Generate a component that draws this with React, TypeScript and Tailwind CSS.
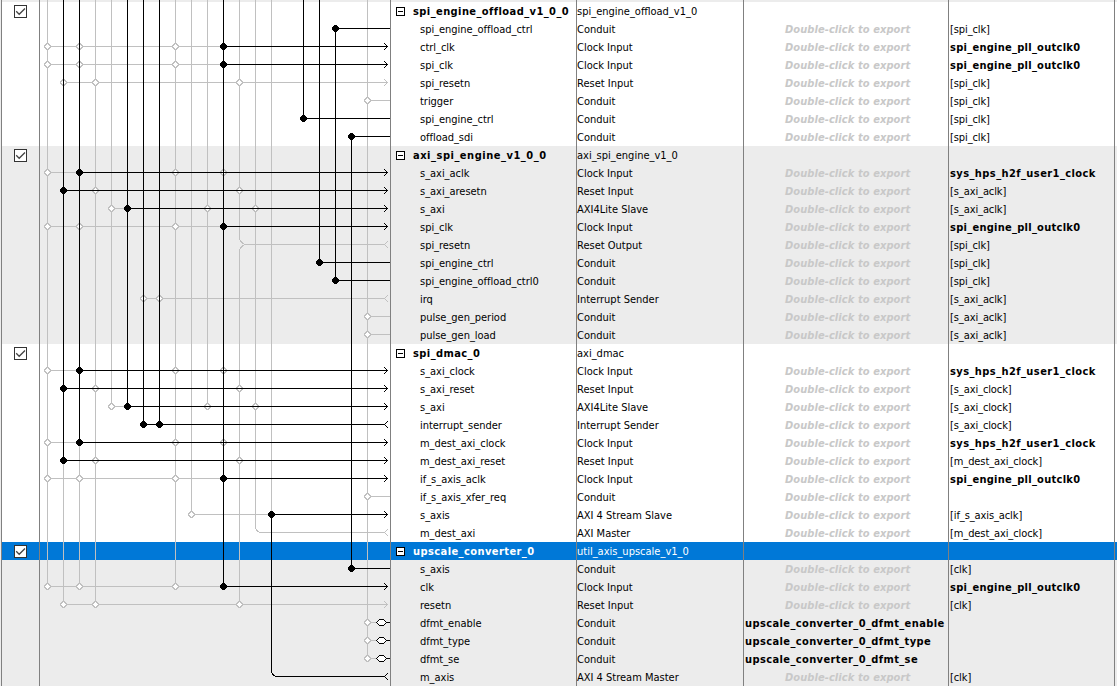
import React from "react";

type Row = {
  name: string;
  kind: string;
  clock?: string;
  export?: string;
  head?: boolean;
};

type Group = { shaded: boolean; selected?: boolean; rows: Row[] };

const g = (name: string, kind: string): Row => ({ name, kind, head: true });
const r = (name: string, kind: string, clock?: string, exp?: string): Row => ({
  name,
  kind,
  clock,
  export: exp,
});

const PLL = "spi_engine_pll_outclk0";
const HPS = "sys_hps_h2f_user1_clock";

const groups: Group[] = [
  {
    shaded: false,
    rows: [
      g("spi_engine_offload_v1_0_0", "spi_engine_offload_v1_0"),
      r("spi_engine_offload_ctrl", "Conduit", "[spi_clk]"),
      r("ctrl_clk", "Clock Input", PLL),
      r("spi_clk", "Clock Input", PLL),
      r("spi_resetn", "Reset Input", "[spi_clk]"),
      r("trigger", "Conduit", "[spi_clk]"),
      r("spi_engine_ctrl", "Conduit", "[spi_clk]"),
      r("offload_sdi", "Conduit", "[spi_clk]"),
    ],
  },
  {
    shaded: true,
    rows: [
      g("axi_spi_engine_v1_0_0", "axi_spi_engine_v1_0"),
      r("s_axi_aclk", "Clock Input", HPS),
      r("s_axi_aresetn", "Reset Input", "[s_axi_aclk]"),
      r("s_axi", "AXI4Lite Slave", "[s_axi_aclk]"),
      r("spi_clk", "Clock Input", PLL),
      r("spi_resetn", "Reset Output", "[spi_clk]"),
      r("spi_engine_ctrl", "Conduit", "[spi_clk]"),
      r("spi_engine_offload_ctrl0", "Conduit", "[spi_clk]"),
      r("irq", "Interrupt Sender", "[s_axi_aclk]"),
      r("pulse_gen_period", "Conduit", "[s_axi_aclk]"),
      r("pulse_gen_load", "Conduit", "[s_axi_aclk]"),
    ],
  },
  {
    shaded: false,
    rows: [
      g("spi_dmac_0", "axi_dmac"),
      r("s_axi_clock", "Clock Input", HPS),
      r("s_axi_reset", "Reset Input", "[s_axi_clock]"),
      r("s_axi", "AXI4Lite Slave", "[s_axi_clock]"),
      r("interrupt_sender", "Interrupt Sender", "[s_axi_clock]"),
      r("m_dest_axi_clock", "Clock Input", HPS),
      r("m_dest_axi_reset", "Reset Input", "[m_dest_axi_clock]"),
      r("if_s_axis_aclk", "Clock Input", PLL),
      r("if_s_axis_xfer_req", "Conduit"),
      r("s_axis", "AXI 4 Stream Slave", "[if_s_axis_aclk]"),
      r("m_dest_axi", "AXI Master", "[m_dest_axi_clock]"),
    ],
  },
  {
    shaded: true,
    selected: true,
    rows: [
      g("upscale_converter_0", "util_axis_upscale_v1_0"),
      r("s_axis", "Conduit", "[clk]"),
      r("clk", "Clock Input", PLL),
      r("resetn", "Reset Input", "[clk]"),
      r("dfmt_enable", "Conduit", undefined, "upscale_converter_0_dfmt_enable"),
      r("dfmt_type", "Conduit", undefined, "upscale_converter_0_dfmt_type"),
      r("dfmt_se", "Conduit", undefined, "upscale_converter_0_dfmt_se"),
      r("m_axis", "AXI 4 Stream Master", "[clk]"),
    ],
  },
];

/* ---- wiring ---- */

type End = "plain" | "in" | "out" | "export";
type Wire = {
  row: number;
  from: number;
  blackFrom?: number;
  end: End;
  open?: number[];
  dots?: number[];
};

const pll = (row: number): Wire => ({ row, from: 47, blackFrom: 223, end: "in", open: [47, 79, 175], dots: [223] });
const hps = (row: number): Wire => ({ row, from: 47, blackFrom: 79, end: "in", open: [47, 175, 223], dots: [79] });
const reset = (row: number): Wire => ({ row, from: 63, blackFrom: 63, end: "in", open: [95, 239], dots: [63] });
const freeReset = (row: number): Wire => ({ row, from: 63, end: "in", open: [63, 95, 239] });
const axi = (row: number): Wire => ({ row, from: 111, blackFrom: 127, end: "in", open: [111, 207, 255], dots: [127] });
const conduit = (row: number, x: number): Wire => ({ row, from: x, blackFrom: x, end: "plain", dots: [x] });
const spare = (row: number): Wire => ({ row, from: 367, end: "plain", open: [367] });
const exported = (row: number): Wire => ({ row, from: 367, end: "export", open: [367] });

const wires: Wire[] = [
  conduit(1, 335), pll(2), pll(3), freeReset(4), spare(5), conduit(6, 303), conduit(7, 351),
  hps(9), reset(10), axi(11), pll(12),
  { row: 13, from: 245, end: "out" },
  conduit(14, 319), conduit(15, 335),
  { row: 16, from: 143, end: "out", open: [143, 159] },
  spare(17), spare(18),
  hps(20), reset(21), axi(22),
  { row: 23, from: 143, blackFrom: 143, end: "out", dots: [143, 159] },
  hps(24), reset(25), pll(26), spare(27),
  { row: 28, from: 191, blackFrom: 271, end: "in", open: [191], dots: [271] },
  { row: 29, from: 262, end: "out" },
  conduit(31, 351), pll(32), freeReset(33), exported(34), exported(35), exported(36),
  { row: 37, from: 278, blackFrom: 278, end: "out" },
];

const grayBuses: [number, number, number][] = [
  [47, 0, 586], [63, 460, 604], [79, 442, 586], [95, 0, 604], [111, 0, 406],
  [175, 0, 586], [191, 0, 514], [207, 0, 406], [239, 0, 238], [239, 251, 604],
  [255, 0, 526], [271, 0, 514], [367, 0, 658],
];
const blackBuses: [number, number, number][] = [
  [63, 0, 460], [79, 0, 442], [127, 0, 406], [143, 0, 424], [159, 0, 424],
  [223, 0, 586], [271, 514, 670], [303, 0, 118], [319, 0, 262], [335, 28, 280], [351, 136, 568],
];

const wireY = (row: number) => 10 + 18 * row;
const endX: Record<End, number> = { plain: 390, in: 388, out: 385, export: 376 };

const hLine = (x1: number, x2: number, y: number) => `M${x1} ${y + 0.5}H${x2}`;
const vLine = ([x, y1, y2]: [number, number, number]) => `M${x + 0.5} ${y1}V${y2}`;

function tip(end: End, y: number) {
  if (end === "in") return `M384 ${y - 3}h1v1h1v1h1v1h1v1h-1v1h-1v1h-1v1h-1v-1h1v-1h1v-1h1v-1h-1v-1h-1v-1h-1z`;
  if (end === "out") return `M388 ${y - 3}h-1v1h-1v1h-1v1h-1v1h1v1h1v1h1v1h1v-1h-1v-1h-1v-1h-1v-1h1v-1h1v-1h1z`;
  return "";
}

function Wiring() {
  return (
    <svg
      className="pointer-events-none z-10 col-start-1 row-start-1 h-[687px] w-[390px]"
      viewBox="0 0 390 687"
      shapeRendering="crispEdges"
      fill="none"
    >
      <g stroke="#c0c0c0">
        <path d={grayBuses.map(vLine).join("")} />
        <path
          d={wires
            .filter((w) => w.from !== w.blackFrom)
            .map((w) => hLine(w.from, w.blackFrom ?? endX[w.end], wireY(w.row)))
            .join("")}
        />
        <path d="M239.5 237.5Q240 243 245.500 244.500M239.500 251.500Q240 246 245.500 244.500" />
        <path d="M255.500 525.500Q255.500 532.500 262.500 532.500" />
      </g>
      <path
        fill="#c0c0c0"
        d={wires.filter((w) => w.blackFrom === undefined).map((w) => tip(w.end, wireY(w.row))).join("")}
      />
      {wires.flatMap((w) =>
        (w.open ?? []).map((x) => (
          <g key={`${w.row}-${x}`} transform={`translate(${x - 3} ${wireY(w.row) - 3})`}>
            <path fill="#c0c0c0" d="M2 0h3v1h1v1h1v3h-1v1h-1v1h-3v-1h-1v-1h-1v-3h1v-1h1z" />
            <path fill="#fff" d="M3 1h1v1h1v1h1v1h-1v1h-1v1h-1v-1h-1v-1h-1v-1h1v-1h1z" />
          </g>
        )),
      )}
      <g stroke="#000">
        <path d={blackBuses.map(vLine).join("")} />
        <path
          d={wires
            .filter((w) => w.blackFrom !== undefined)
            .map((w) => hLine(w.blackFrom as number, endX[w.end], wireY(w.row)))
            .join("")}
        />
        <path d="M271.500 669.500Q271.500 676.500 278.500 676.500" />
      </g>
      <path
        fill="#000"
        d={wires.filter((w) => w.blackFrom !== undefined).map((w) => tip(w.end, wireY(w.row))).join("")}
      />
      {wires.flatMap((w) =>
        (w.dots ?? []).map((x) => (
          <path
            key={`${w.row}-${x}`}
            fill="#000"
            transform={`translate(${x - 3} ${wireY(w.row) - 3})`}
            d="M2 0h3v1h1v1h1v3h-1v1h-1v1h-3v-1h-1v-1h-1v-3h1v-1h1z"
          />
        )),
      )}
      {wires
        .filter((w) => w.end === "export")
        .map((w) => (
          <g key={w.row} transform={`translate(376 ${wireY(w.row)})`}>
            <path fill="#000" d="M0 0h1v-1h1v-1h1v-1h5v1h1v1h1v1h4v1h-4v1h-1v1h-1v1h-5v-1h-1v-1h-1v-1h-1z" />
            <path fill="#fff" d="M1 0h1v-1h1v-1h5v1h1v1h1v1h-1v1h-1v1h-5v-1h-1v-1h-1z" />
          </g>
        ))}
    </svg>
  );
}

function Check() {
  return (
    <span className="mt-[3px] ml-3 block h-[13px] w-[13px] border border-[#333] bg-white">
      <svg viewBox="0 0 11 11" className="block h-[11px] w-[11px]" fill="none" stroke="#444" strokeWidth="1.300">
        <path d="M1.200 5.300L4.200 8.300L10 2.500" />
      </svg>
    </span>
  );
}

function Collapse() {
  return (
    <span className="mt-[5px] mr-2 ml-[5px] flex h-[9px] w-[9px] shrink-0 items-center justify-center border border-black bg-white">
      <span className="h-px w-[5px] bg-black" />
    </span>
  );
}

const cell = "h-full shrink-0 border-r border-[#808080]";

function TableRow({ row, bg, selected }: { row: Row; bg: string; selected?: boolean }) {
  const headTracking = row.name.startsWith("axi") ? "tracking-[0.52px]" : "tracking-[0.42px]";
  const clockTracking = row.clock === PLL ? "tracking-[0.27px]" : "tracking-[0.42px]";
  return (
    <div className={`flex h-[18px] ${bg} ${selected ? "text-white" : "text-black"}`}>
      <div className={`${cell} w-0.5 bg-[#ececec]`} />
      <div className={`${cell} w-[38px]`}>{row.head && <Check />}</div>
      <div className={`${cell} w-[351px]`} />
      <div className={`${cell} flex w-[186px]`}>
        {row.head && <Collapse />}
        <span className={row.head ? `font-bold ${headTracking}` : "pl-[29px] tracking-[-0.03px]"}>{row.name}</span>
      </div>
      <div className={`${cell} w-[167px]`}>{row.kind}</div>
      <div className={`${cell} w-[205px]`}>
        {row.export && <span className="pl-px font-bold tracking-[0.39px]">{row.export}</span>}
        {!row.head && !row.export && (
          <span className="pl-[41px] font-bold tracking-[0.08px] text-[#c8c8c8] italic">Double-click to export</span>
        )}
      </div>
      <div className={`${cell} w-[166px] pl-px`}>
        {row.clock && (
          <span className={row.clock.startsWith("[") ? "tracking-[-0.1px]" : `font-bold ${clockTracking}`}>
            {row.clock}
          </span>
        )}
      </div>
    </div>
  );
}

function Edge() {
  return (
    <div className="flex h-0.5 bg-[#ececec]">
      <div className={`${cell} w-0.5`} />
      <div className={`${cell} w-[38px]`} />
      <div className={`${cell} w-[351px]`} />
      <div className={`${cell} w-[186px]`} />
      <div className={`${cell} w-[167px]`} />
      <div className={`${cell} w-[205px]`} />
      <div className={`${cell} w-[166px]`} />
    </div>
  );
}

export default function App() {
  return (
    <div className="grid h-[687px] w-[1117px] overflow-hidden bg-white font-['DejaVu_Sans_Condensed','DejaVu_Sans',sans-serif] text-[11px] leading-[20px] whitespace-nowrap">
      <div className="col-start-1 row-start-1">
        <Edge />
        {groups.map((group, gi) =>
          group.rows.map((row, i) => {
            const selected = group.selected && i === 0;
            const bg = selected ? "bg-[#0078d7]" : group.shaded ? "bg-[#ececec]" : "bg-white";
            return <TableRow key={`${gi}-${i}`} row={row} bg={bg} selected={selected} />;
          }),
        )}
      </div>
      <Wiring />
    </div>
  );
}
